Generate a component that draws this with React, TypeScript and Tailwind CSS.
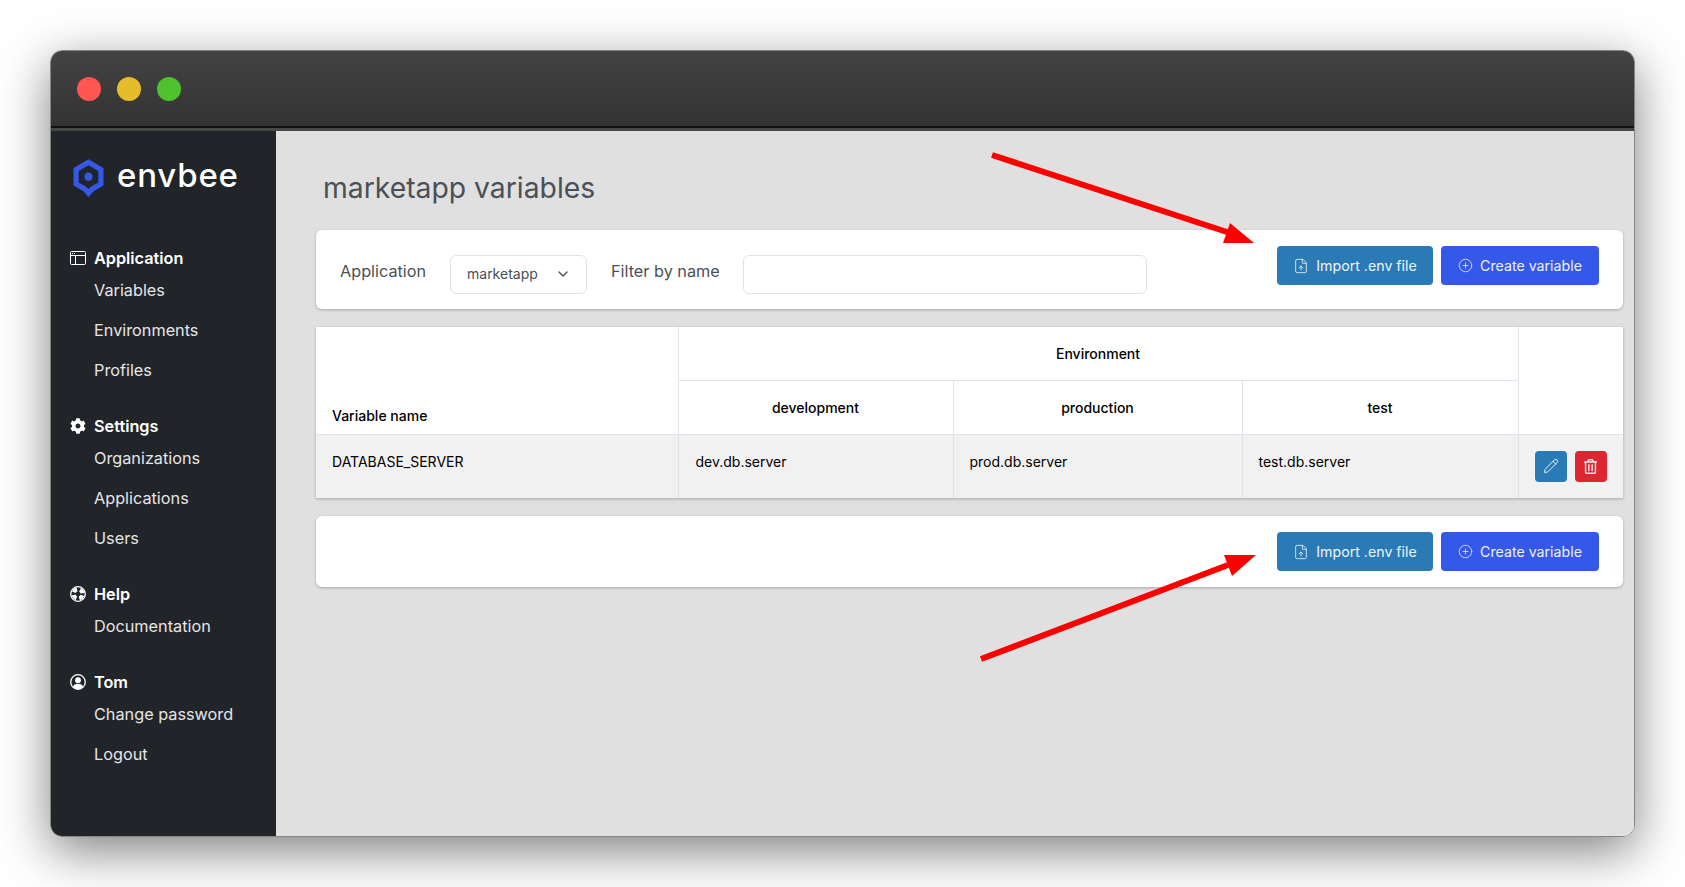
import { CirclePlus, FileUp, Pencil, ChevronDown } from "lucide-react";
import { FaCog, FaRegTrashAlt } from "react-icons/fa";
import type { ReactNode } from "react";

function WindowIcon() {
  return (
    <svg viewBox="0 0 16 14" className="h-[14px] w-[16px]" fill="none" stroke="currentColor" strokeWidth="1">
      <rect x="0.5" y="0.5" width="15" height="13" rx="1" />
      <path d="M0.5 4.5h15M5.5 4.5v9" />
      <path d="M2 2.5h1M4 2.5h1" />
    </svg>
  );
}

function HelpIcon() {
  return (
    <svg viewBox="0 0 16 16" className="h-4 w-4" fill="none" stroke="currentColor">
      <circle cx="8" cy="8" r="7.3" strokeWidth="1.3" />
      <circle cx="8" cy="8" r="4.6" strokeWidth="4" strokeDasharray="4.2 3.03" strokeDashoffset="-1.5" />
    </svg>
  );
}

function UserIcon() {
  return (
    <svg viewBox="0 0 16 16" className="h-4 w-4">
      <circle cx="8" cy="6.2" r="2.9" fill="currentColor" />
      <path d="M3 13 C3.5 10.4 5.5 9.8 8 9.8 C10.5 9.8 12.5 10.4 13 13 C11.6 14.4 9.8 15 8 15 C6.2 15 4.4 14.4 3 13 Z" fill="currentColor" />
      <circle cx="8" cy="8" r="7.3" fill="none" stroke="currentColor" strokeWidth="1.3" />
    </svg>
  );
}

function Logo() {
  return (
    <svg viewBox="0 0 30 36.5" className="h-[38px] w-[31px]">
      <path
        d="M15 3 L27 10 V24 L18.5 29 L15 33 L11.5 29 L3 24 V10 Z"
        fill="none"
        stroke="#3558e8"
        strokeWidth="5"
        strokeLinejoin="miter"
      />
      <circle cx="15" cy="17" r="4" fill="#3558e8" />
    </svg>
  );
}

function NavSection({ icon, title, items }: { icon: ReactNode; title: string; items: string[] }) {
  return (
    <div className="mb-[24px]">
      <div className="flex h-[24px] items-center font-semibold text-white">
        <span className="flex w-[24px] justify-start">{icon}</span>
        {title}
      </div>
      <ul>
        {items.map((item) => (
          <li key={item} className="flex h-[40px] items-center pl-[24px] text-[#e6e6e6]">
            {item}
          </li>
        ))}
      </ul>
    </div>
  );
}

function ActionButtons() {
  return (
    <div className="flex gap-2">
      <button className="flex h-[39px] w-[156px] items-center justify-center gap-[7px] rounded-[4px] bg-[#2a7ab5] text-[14.2px] text-[#eef5fa]">
        <FileUp size={16} strokeWidth={1.25} />
        Import .env file
      </button>
      <button className="flex h-[39px] w-[158px] items-center justify-center gap-[7px] rounded-[4px] bg-[#3558e8] text-[14.2px] text-[#eef1fd]">
        <CirclePlus size={15} strokeWidth={1.25} />
        Create variable
      </button>
    </div>
  );
}

function Arrow({ className, x1, y1, x2, y2, head }: { className: string; x1: number; y1: number; x2: number; y2: number; head: string }) {
  return (
    <svg className={className} viewBox="0 0 290 110">
      <line x1={x1} y1={y1} x2={x2} y2={y2} stroke="#ff0000" strokeWidth="6" />
      <polygon points={head} fill="#ff0000" />
    </svg>
  );
}

export default function App() {
  return (
    <div className="relative h-[887px] w-[1685px] overflow-hidden bg-white pl-[50px] pt-[50px] font-['Inter',sans-serif]">
      <div className="flex h-[787px] w-[1585px] flex-col overflow-hidden rounded-[12px] border border-[#858585] shadow-[0_14px_50px_rgba(0,0,0,0.5)]">
        <header className="flex h-[75px] shrink-0 items-center gap-[16px] bg-gradient-to-b from-[#434343] to-[#333333] pl-[26px]">
          <span className="h-[24px] w-[24px] rounded-full bg-[#ff5652]" />
          <span className="h-[24px] w-[24px] rounded-full bg-[#e7bc2a]" />
          <span className="h-[24px] w-[24px] rounded-full bg-[#4fc12c]" />
        </header>
        <div className="h-[2px] shrink-0 bg-[#111111]" />
        <div className="h-[3px] shrink-0 bg-[#474747]" />

        <div className="flex min-h-0 flex-1">
          <aside className="w-[225px] shrink-0 bg-[#212429] pl-[19px] pt-[28px] text-[16.25px]">
            <div className="mb-[49px] flex h-[38px] items-center gap-[13px] pl-[3px]">
              <Logo />
              <span className="pb-[6px] text-[33px] font-medium leading-none tracking-[0.8px] text-white">envbee</span>
            </div>
            <NavSection icon={<WindowIcon />} title="Application" items={["Variables", "Environments", "Profiles"]} />
            <NavSection icon={<FaCog size={16} />} title="Settings" items={["Organizations", "Applications", "Users"]} />
            <NavSection icon={<HelpIcon />} title="Help" items={["Documentation"]} />
            <NavSection icon={<UserIcon />} title="Tom" items={["Change password", "Logout"]} />
          </aside>

          <main className="min-w-0 flex-1 bg-[#e0e0e0] pl-[40px] pr-[11px] pt-[36px]">
            <h1 className="mb-[21px] pl-[7px] text-[28.3px] font-normal leading-[42px] text-[#495057]">marketapp variables</h1>

            <section className="mb-[18px] flex h-[79px] items-start justify-between rounded-[6px] bg-white px-[24px] pt-[16px] shadow-[0_1px_3px_rgba(0,0,0,0.25)]">
              <div className="mt-[9px] flex items-center text-[16.25px] text-[#495057]">
                <label className="w-[110px] pb-[7px]">Application</label>
                <div className="flex h-[39px] w-[137px] items-center justify-between rounded-[6px] border border-[#e2e2ea] pb-[1px] pl-[16px] pr-[15px] text-sm">
                  <span>marketapp</span>
                  <ChevronDown size={16} />
                </div>
                <label className="ml-[24px] w-[132px] pb-[7px]">Filter by name</label>
                <input className="h-[39px] w-[404px] rounded-[6px] border border-[#e2e2ea] bg-white" />
              </div>
              <ActionButtons />
            </section>

            <table className="mb-[18px] w-full table-fixed border-collapse bg-white text-sm text-black shadow-[0_1px_3px_rgba(0,0,0,0.25)]">
              <colgroup>
                <col className="w-[362px]" />
                <col className="w-[275px]" />
                <col className="w-[289px]" />
                <col className="w-[276px]" />
                <col />
              </colgroup>
              <thead>
                <tr className="h-[53px]">
                  <th rowSpan={2} className="align-bottom pb-[8px] pl-[16px] text-left font-medium">Variable name</th>
                  <th colSpan={3} className="border-b border-l border-[#e2e2ea] pt-[2px] font-medium">Environment</th>
                  <th rowSpan={2} className="border-l border-[#e2e2ea]" />
                </tr>
                <tr className="h-[54px]">
                  <th className="border-l border-[#e2e2ea] pt-[2px] font-medium">development</th>
                  <th className="border-l border-[#e2e2ea] pt-[2px] font-medium">production</th>
                  <th className="border-l border-[#e2e2ea] pt-[2px] font-medium">test</th>
                </tr>
              </thead>
              <tbody>
                <tr className="h-[64px] border-t border-[#e2e2ea] bg-[#f1f1f1]">
                  <td className="pb-[8px] pl-[16px]">DATABASE_SERVER</td>
                  <td className="border-l border-[#e2e2ea] pb-[8px] pl-[17px]">dev.db.server</td>
                  <td className="border-l border-[#e2e2ea] pb-[8px] pl-[16px]">prod.db.server</td>
                  <td className="border-l border-[#e2e2ea] pb-[8px] pl-[16px]">test.db.server</td>
                  <td className="border-l border-[#e2e2ea]">
                    <div className="flex justify-center gap-2">
                      <button className="flex h-[31px] w-[32px] items-center justify-center rounded-[4px] bg-[#2a7ab5] text-[#e6f0f7]">
                        <Pencil size={16} strokeWidth={1.5} />
                      </button>
                      <button className="flex h-[31px] w-[32px] items-center justify-center rounded-[4px] bg-[#dc2630] text-[#fbe9ea]">
                        <FaRegTrashAlt size={15} />
                      </button>
                    </div>
                  </td>
                </tr>
              </tbody>
            </table>

            <section className="flex h-[71px] items-start justify-end rounded-[6px] bg-white pr-[24px] pt-[16px] shadow-[0_1px_3px_rgba(0,0,0,0.25)]">
              <ActionButtons />
            </section>
          </main>
        </div>
      </div>

      {/* red annotation arrows drawn over the screenshot */}
      <Arrow
        className="absolute left-[980px] top-[146px] h-[110px] w-[290px]"
        x1={12}
        y1={9}
        x2={250}
        y2={87}
        head="274,97 243,97 250,77"
      />
      <Arrow
        className="absolute left-[970px] top-[552px] h-[110px] w-[290px]"
        x1={11}
        y1={107}
        x2={258}
        y2={13}
        head="286,3 254,3 262,24"
      />
    </div>
  );
}
